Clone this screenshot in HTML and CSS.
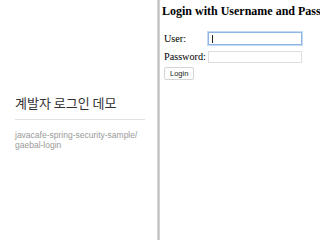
FILE: index.html
```html
<!DOCTYPE html>
<html>
<head>
<meta charset="utf-8">
<link rel="stylesheet" href="styles.css">
</head>
<body>
<div class="page">
  <div class="side">
    <h1 class="side-title">계발자 로그인 데모</h1>
    <hr class="side-rule">
    <p class="side-sub">javacafe-spring-security-sample/<br>gaebal-login</p>
  </div>
  <div class="divider"></div>
  <div class="main">
    <h3 class="login-title">Login with Username and Password</h3>
    <div class="form">
      <div class="row">
        <span class="label">User:</span>
        <div class="field focused"><span class="caret"></span></div>
      </div>
      <div class="row">
        <span class="label">Password:</span>
        <div class="field"></div>
      </div>
      <div class="btn">Login</div>
    </div>
  </div>
</div>
</body>
</html>
```

FILE: styles.css
```css
html, body {
  margin: 0;
  padding: 0;
  background: #fff;
}
.page {
  display: flex;
  width: 320px;
  height: 240px;
  overflow: hidden;
}
.side {
  width: 157px;
  flex: none;
  padding: 94px 12px 0 15px;
  box-sizing: border-box;
  display: flex;
  flex-direction: column;
}
.side-title {
  margin: 0;
  font-family: "Noto Sans CJK KR", "Noto Sans", sans-serif;
  font-weight: 400;
  font-size: 13px;
  line-height: 18px;
  color: #333;
}
.side-rule {
  border: 0;
  border-top: 1px solid #e2e2e2;
  margin: 7px 0 0 0;
  width: 130px;
}
.side-sub {
  margin: 10px 0 0 0;
  font-family: "Liberation Sans", Arial, sans-serif;
  font-size: 8.5px;
  line-height: 10px;
  color: #9a9a9a;
}
.divider {
  width: 3px;
  flex: none;
  background: linear-gradient(to right, #e6e6e6, #bdbdbd, #e0e0e0);
}
.main {
  flex: 1;
  padding: 0 0 0 2px;
  font-family: "Liberation Serif", "Times New Roman", serif;
  color: #000;
  white-space: nowrap;
  overflow: hidden;
}
.login-title {
  margin: 4px 0 0 0;
  font-size: 12px;
  line-height: 14px;
  font-weight: 700;
}
.form {
  margin-top: 14px;
  display: flex;
  flex-direction: column;
  align-items: flex-start;
}
.row {
  display: flex;
  align-items: center;
  font-size: 10.2px;
  height: 13px;
  margin-bottom: 5px;
}
.label {
  width: 44px;
  padding-left: 2px;
}
.field {
  width: 89px;
  height: 10px;
  border: 1px solid #dedede;
  box-sizing: content-box;
  display: flex;
  align-items: center;
  padding-left: 3px;
}
.field.focused {
  border-color: #8fb6e6;
  box-shadow: 0 0 0 1px #c4daf4;
  height: 11px;
}
.caret {
  width: 1px;
  height: 8px;
  background: #222;
}
.btn {
  margin-top: -1px;
  margin-left: 2px;
  font-family: "Liberation Sans", Arial, sans-serif;
  font-size: 7.5px;
  line-height: 9px;
  padding: 1px 5px;
  border: 1px solid #d5d5d5;
  border-radius: 2px;
  background: #fdfdfd;
  color: #222;
}
```
